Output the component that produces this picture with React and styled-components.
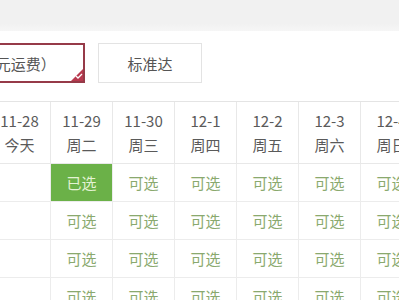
import React from "react";
import styled, { createGlobalStyle } from "styled-components";

const GlobalStyle = createGlobalStyle`
  html, body {
    margin: 0;
    padding: 0;
    background: #fff;
    overflow: hidden;
  }
  body {
    font-family: "Noto Sans CJK SC", "Noto Sans", sans-serif;
  }
`;

const days = [
  { date: "11-28", week: "今天", today: true },
  { date: "11-29", week: "周二" },
  { date: "11-30", week: "周三" },
  { date: "12-1", week: "周四" },
  { date: "12-2", week: "周五" },
  { date: "12-3", week: "周六" },
  { date: "12-4", week: "周日" },
];

const rows = [0, 1, 2, 3];

const App = () => {
  return (
    <Page>
      <GlobalStyle />
      <TopBar />
      <Options>
        <Option selected>
          （10元运费）
          <Corner>
            <svg width="8" height="6" viewBox="0 0 8 6">
              <path d="M1 3 L3 5 L7 1" fill="none" stroke="#fff" strokeWidth="1.3" />
            </svg>
          </Corner>
        </Option>
        <Option>标准达</Option>
      </Options>
      <Table>
        {days.map((d) => (
          <HeadCell key={d.date}>
            <DateText>{d.date}</DateText>
            <WeekText>{d.week}</WeekText>
          </HeadCell>
        ))}
        {rows.map((r) =>
          days.map((d, i) => {
            if (d.today) return <Cell key={r + d.date} />;
            const chosen = r === 0 && i === 1;
            return (
              <Cell key={r + d.date} chosen={chosen}>
                {chosen ? "已选" : "可选"}
              </Cell>
            );
          })
        )}
      </Table>
    </Page>
  );
};

const Page = styled.div`
  width: 399px;
  height: 300px;
  overflow: hidden;
`;

const TopBar = styled.div`
  height: 31px;
  background: linear-gradient(#f1f1f1 0%, #f1f1f1 75%, #f6f6f6 100%);
`;

const Options = styled.div`
  display: flex;
  align-items: center;
  gap: 13px;
  margin-top: 12px;
  height: 40px;
`;

const Option = styled.div`
  position: relative;
  box-sizing: border-box;
  height: 40px;
  display: flex;
  align-items: center;
  justify-content: center;
  font-size: 15px;
  color: #555;
  background: #fff;
  width: ${(p) => (p.selected ? "150px" : "104px")};
  margin-left: ${(p) => (p.selected ? "-65px" : "0")};
  border: ${(p) => (p.selected ? "2px solid #963a48" : "1px solid #e3e3e3")};
  white-space: nowrap;
`;

const Corner = styled.div`
  position: absolute;
  right: 0;
  bottom: 0;
  width: 0;
  height: 0;
  border-style: solid;
  border-width: 0 0 12px 12px;
  border-color: transparent transparent #b8394e transparent;

  svg {
    position: absolute;
    left: -8px;
    top: 4px;
  }
`;

const Table = styled.div`
  display: grid;
  grid-template-columns: repeat(7, 62px);
  grid-template-rows: 62px repeat(4, 38px);
  margin-top: 18px;
  margin-left: -11px;
  border-top: 1px solid #e4e4e4;
`;

const HeadCell = styled.div`
  display: flex;
  flex-direction: column;
  align-items: center;
  justify-content: center;
  border-right: 1px solid #e8e8e8;
  border-bottom: 1px solid #e8e8e8;
  color: #5a5a5a;
`;

const DateText = styled.div`
  font-size: 15px;
  line-height: 24px;
`;

const WeekText = styled.div`
  font-size: 15px;
  line-height: 24px;
`;

const Cell = styled.div`
  display: flex;
  align-items: center;
  justify-content: center;
  font-size: 15px;
  border-right: 1px solid #ececec;
  border-bottom: 1px solid #ececec;
  background: ${(p) => (p.chosen ? "#6bb148" : "#fff")};
  color: ${(p) => (p.chosen ? "#e4f3d4" : "#8aa96e")};
`;

export default App;
